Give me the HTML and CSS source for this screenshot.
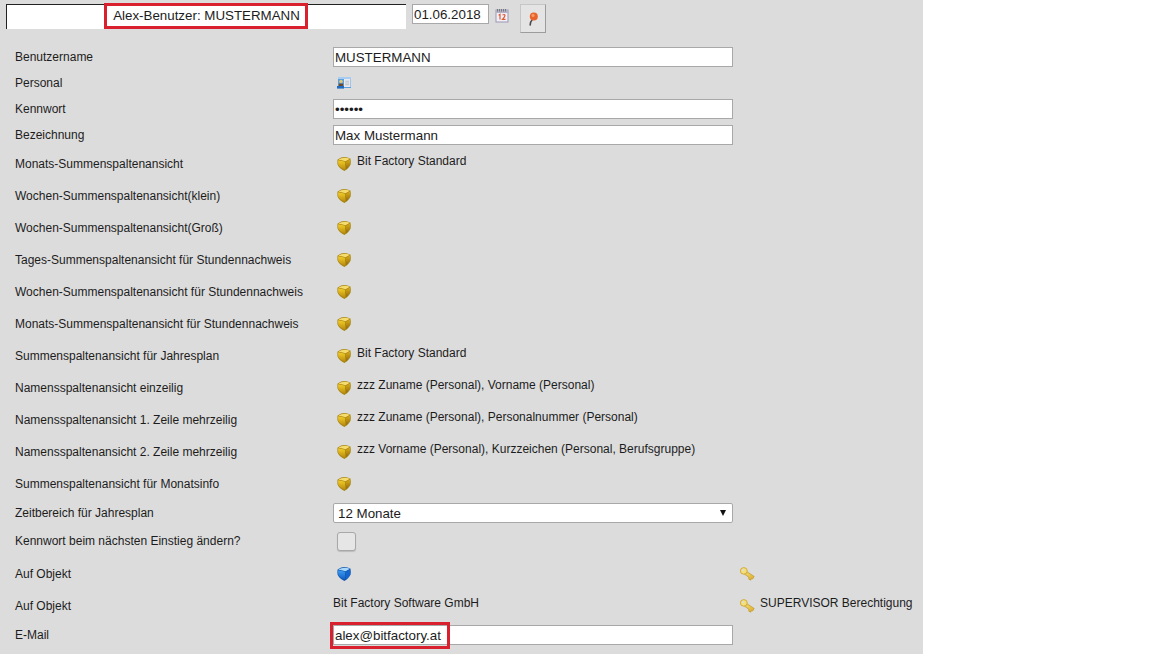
FILE: index.html
```
<!DOCTYPE html>
<html lang="de">
<head>
<meta charset="utf-8">
<title>Alex-Benutzer</title>
<link rel="stylesheet" href="styles.css">
</head>
<body>
<svg class="defs" width="0" height="0" aria-hidden="true">
  <defs>
    <linearGradient id="gSide" x1="0" y1="0" x2="0" y2="1"><stop offset="0" stop-color="#f3cf2a"/><stop offset="1" stop-color="#b88a0c"/></linearGradient>
    <linearGradient id="gRight" x1="0" y1="0" x2="0" y2="1"><stop offset="0" stop-color="#d9ac18"/><stop offset="1" stop-color="#8f6c10"/></linearGradient>
    <linearGradient id="bSide" x1="0" y1="0" x2="0" y2="1"><stop offset="0" stop-color="#3f9ff2"/><stop offset="1" stop-color="#0e5cc4"/></linearGradient>
    <linearGradient id="kGold" x1="0" y1="0" x2="1" y2="1"><stop offset="0" stop-color="#f7e27e"/><stop offset="1" stop-color="#d9a924"/></linearGradient>
    <symbol id="cube-gold" viewBox="0 0 14 15">
      <path d="M0.6 3.4 Q7 -0.8 13.4 2.6 Q14 6 13.6 8.2 Q12.4 12 7.4 15 Q1.8 12.4 0.6 8.6 Q0.2 6 0.6 3.4 Z" fill="#a98410"/>
      <path d="M1.2 3.5 Q7 0.2 12.9 2.8 L8.6 5.2 Z" fill="#f4dc70"/>
      <path d="M1.2 4.2 L8.2 5.8 V13.8 Q2.6 11.6 1.2 8.4 Q0.9 6 1.2 4.2 Z" fill="url(#gSide)"/>
      <path d="M9 5.8 L13 3.6 Q13.3 6 13 8 Q12 11.2 9 13.2 Z" fill="url(#gRight)"/>
    </symbol>
    <symbol id="cube-blue" viewBox="0 0 14 15">
      <path d="M0.6 3.4 Q7 -0.8 13.4 2.6 Q14 6 13.6 8.2 Q12.4 12 7.4 15 Q1.8 12.4 0.6 8.6 Q0.2 6 0.6 3.4 Z" fill="#0f56b0"/>
      <path d="M1.2 3.5 Q7 0.2 12.9 2.8 L8.6 5.2 Z" fill="#a9d8fb"/>
      <path d="M1.2 4.2 L8.2 5.8 V13.8 Q2.6 11.6 1.2 8.4 Q0.9 6 1.2 4.2 Z" fill="url(#bSide)"/>
      <path d="M9 5.8 L13 3.6 Q13.3 6 13 8 Q12 11.2 9 13.2 Z" fill="#1766cf"/>
    </symbol>
    <symbol id="key" viewBox="0 0 15 15">
      <path d="M5.2 3.6 L14.2 9.4 L12.6 12 L11.6 11.2 L10.8 13.2 L8.8 12.2 L8.8 10.2 L3.6 6.6 Z" fill="url(#kGold)" stroke="#bb911f" stroke-width=".6"/>
      <ellipse cx="3.8" cy="3.9" rx="3.4" ry="3.3" fill="#f5df7a" stroke="#c79d2b" stroke-width=".8"/>
      <circle cx="3.1" cy="3.1" r="1" fill="#dcdcdc"/>
    </symbol>
  </defs>
</svg>

<main class="panel">
  <header class="topbar">
    <div class="title">Alex-Benutzer: MUSTERMANN</div>
    <input class="date" type="text" value="01.06.2018" aria-label="Datum">
    <svg class="cal" viewBox="0 0 14 15" width="14" height="15" aria-hidden="true">
      <rect x="1" y="2" width="12" height="12" fill="#f1eff8" stroke="#9a97b4"/>
      <rect x="1" y="2" width="12" height="3" fill="#b4b2c6"/>
      <path d="M2.5 1v2.5M4.5 1v2.5M6.5 1v2.5M8.5 1v2.5M10.5 1v2.5" stroke="#6a6a6a" stroke-width=".8"/>
      <path d="M3.6 7.2 L5 6.4 V11.5 M7.5 7 Q9.8 5.8 10 7.6 Q10 8.6 7.5 11.3 H10.5" fill="none" stroke="#de5a30" stroke-width="1.2"/>
    </svg>
    <button class="pin" type="button" aria-label="Anheften">
      <svg viewBox="0 0 12 16" width="12" height="16" aria-hidden="true">
        <path d="M5 9 Q3.4 10.5 3.2 14" fill="none" stroke="#4a4a4a" stroke-width="1.6" stroke-linecap="round"/>
        <circle cx="6.8" cy="5.6" r="4" fill="#e8642a"/>
        <circle cx="6" cy="4.4" r="1.6" fill="#f49a68"/>
      </svg>
    </button>
    <div class="mark mark-title"></div>
  </header>

  <form class="form">
    <div class="row r26"><span class="label">Benutzername</span><div class="val"><input class="field" type="text" value="MUSTERMANN"></div></div>
    <div class="row r26"><span class="label">Personal</span><div class="val">
      <svg class="person" viewBox="0 0 14 13" width="14" height="13" aria-hidden="true">
        <rect x="1" y="1" width="13" height="11" fill="#5a9fe0"/>
        <rect x="1" y="1" width="13" height="2" fill="#a9cdf0"/>
        <rect x="7" y="3" width="6.5" height="8" fill="#e8ecf2"/>
        <path d="M8.2 5.2h4M8.2 7h4M8.2 8.8h4" stroke="#a5afbd" stroke-width=".7"/>
        <circle cx="4" cy="5.4" r="1.7" fill="#e9c66d"/>
        <rect x="1.8" y="7.6" width="4.4" height="2.4" fill="#74481f"/>
        <rect x="0" y="10" width="7" height="2.6" fill="#1e6cc4"/>
      </svg>
    </div></div>
    <div class="row r26"><span class="label">Kennwort</span><div class="val"><input class="field" type="password" value="123456"></div></div>
    <div class="row r26"><span class="label">Bezeichnung</span><div class="val"><input class="field" type="text" value="Max Mustermann"></div></div>

    <div class="row r32"><span class="label">Monats-Summenspaltenansicht</span><div class="val"><svg class="cube"><use href="#cube-gold"/></svg><span class="cube-text">Bit Factory Standard</span></div></div>
    <div class="row r32"><span class="label">Wochen-Summenspaltenansicht(klein)</span><div class="val"><svg class="cube"><use href="#cube-gold"/></svg></div></div>
    <div class="row r32"><span class="label">Wochen-Summenspaltenansicht(Groß)</span><div class="val"><svg class="cube"><use href="#cube-gold"/></svg></div></div>
    <div class="row r32"><span class="label">Tages-Summenspaltenansicht für Stundennachweis</span><div class="val"><svg class="cube"><use href="#cube-gold"/></svg></div></div>
    <div class="row r32"><span class="label">Wochen-Summenspaltenansicht für Stundennachweis</span><div class="val"><svg class="cube"><use href="#cube-gold"/></svg></div></div>
    <div class="row r32"><span class="label">Monats-Summenspaltenansicht für Stundennachweis</span><div class="val"><svg class="cube"><use href="#cube-gold"/></svg></div></div>
    <div class="row r32"><span class="label">Summenspaltenansicht für Jahresplan</span><div class="val"><svg class="cube"><use href="#cube-gold"/></svg><span class="cube-text">Bit Factory Standard</span></div></div>
    <div class="row r32"><span class="label">Namensspaltenansicht einzeilig</span><div class="val"><svg class="cube"><use href="#cube-gold"/></svg><span class="cube-text">zzz Zuname (Personal), Vorname (Personal)</span></div></div>
    <div class="row r32"><span class="label">Namensspaltenansicht 1. Zeile mehrzeilig</span><div class="val"><svg class="cube"><use href="#cube-gold"/></svg><span class="cube-text">zzz Zuname (Personal), Personalnummer (Personal)</span></div></div>
    <div class="row r32"><span class="label">Namensspaltenansicht 2. Zeile mehrzeilig</span><div class="val"><svg class="cube"><use href="#cube-gold"/></svg><span class="cube-text">zzz Vorname (Personal), Kurzzeichen (Personal, Berufsgruppe)</span></div></div>
    <div class="row r32"><span class="label">Summenspaltenansicht für Monatsinfo</span><div class="val"><svg class="cube"><use href="#cube-gold"/></svg></div></div>

    <div class="row r26"><span class="label">Zeitbereich für Jahresplan</span><div class="val"><div class="select-wrap"><select class="select"><option>12 Monate</option></select></div></div></div>
    <div class="row r30"><span class="label">Kennwort beim nächsten Einstieg ändern?</span><div class="val"><input class="check" type="checkbox"></div></div>
    <div class="row r32 obj-first"><span class="label">Auf Objekt</span><div class="val"><svg class="cube"><use href="#cube-blue"/></svg></div><div class="rights"><svg class="keyicon"><use href="#key"/></svg></div></div>
    <div class="row r32"><span class="label">Auf Objekt</span><div class="val"><span class="plain">Bit Factory Software GmbH</span></div><div class="rights"><svg class="keyicon"><use href="#key"/></svg><span class="rights-text">SUPERVISOR Berechtigung</span></div></div>
    <div class="row r26 mail"><span class="label">E-Mail</span><div class="val"><input class="field" type="text" value="alex@bitfactory.at"></div><div class="mark mark-mail"></div></div>
  </form>
</main>
</body>
</html>
```

FILE: styles.css
```
* { box-sizing: border-box; }

html, body {
  margin: 0;
  padding: 0;
  height: 654px;
  overflow: hidden;
  background: #fff;
}

body {
  font-family: "Liberation Sans", Arial, sans-serif;
  font-size: 12px;
  color: #1c1c1c;
}

.defs { position: absolute; }

.panel {
  width: 923px;
  height: 654px;
  background: #dcdcdc;
  overflow: hidden;
}

/* top bar */
.topbar {
  position: relative;
  display: flex;
  align-items: flex-start;
  height: 44px;
  padding: 4px 0 0 6px;
}

.title {
  width: 400px;
  height: 25px;
  background: #fff;
  border-top: 1px solid #222;
  border-left: 1px solid #222;
  text-align: center;
  line-height: 21px;
  font-size: 13.33px;
}

.date {
  width: 77px;
  height: 20px;
  margin-left: 6px;
  padding: 0 1px;
  border: 1px solid #a8a8a8;
  background: #fff;
  font: 13.33px "Liberation Sans", Arial, sans-serif;
  color: #1c1c1c;
}

.cal { margin: 4px 0 0 6px; }

.pin {
  display: flex;
  align-items: center;
  justify-content: center;
  width: 26px;
  height: 29px;
  margin: 0 0 0 11px;
  padding: 0;
  background: #e4e4e4;
  border: 1px solid #c6c6c6;
  border-right-color: #9c9c9c;
  border-bottom-color: #9c9c9c;
}

.mark {
  position: absolute;
  border: 3px solid #d9202e;
}

.mark-title {
  left: 104px;
  top: 3px;
  width: 204px;
  height: 26px;
}

/* form rows */
.form {
  display: flex;
  flex-direction: column;
}

.row {
  position: relative;
  display: grid;
  grid-template-columns: 318px 400px auto;
  align-items: center;
  padding-left: 15px;
}

.r26 { height: 26px; }
.r30 { height: 30px; }
.r32 { height: 32px; }
.obj-first { margin-top: 2px; }

.label { white-space: nowrap; margin-top: -1px; }

.val {
  display: flex;
  align-items: flex-start;
  height: 100%;
}

.field {
  width: 400px;
  height: 20px;
  margin-top: 3px;
  padding: 0 1px;
  border: 1px solid #a8a8a8;
  background: #fff;
  font: 13.33px "Liberation Sans", Arial, sans-serif;
  color: #1c1c1c;
  outline: none;
}

.person { margin: 6px 0 0 4px; }

.cube {
  width: 14px;
  height: 15px;
  margin: 8px 0 0 4px;
  flex: none;
}

.cube-text {
  margin: 6px 0 0 6px;
  line-height: 14px;
  white-space: nowrap;
}

.plain {
  margin-top: 6px;
  line-height: 14px;
  white-space: nowrap;
}

.select-wrap {
  position: relative;
  width: 400px;
  margin-top: 3px;
}

.select-wrap::after {
  content: "";
  position: absolute;
  right: 7px;
  top: 7px;
  border-style: solid;
  border-width: 6px 3px 0;
  border-color: #111 transparent transparent;
  pointer-events: none;
}

.select {
  display: block;
  width: 400px;
  height: 20px;
  padding: 0 4px;
  border: 1px solid #a8a8a8;
  border-radius: 2px;
  background: #fff;
  font: 13.33px "Liberation Sans", Arial, sans-serif;
  color: #1c1c1c;
  appearance: none;
  -webkit-appearance: none;
}

.check {
  width: 19px;
  height: 19px;
  margin: 6px 0 0 4px;
  border: 1px solid #a8a8a8;
  border-radius: 3px;
  background: #e6e6e6;
  appearance: none;
  -webkit-appearance: none;
  box-shadow: 0 1px 1px rgba(0, 0, 0, .15);
}

.rights {
  display: flex;
  align-items: flex-start;
  height: 100%;
  margin-left: 7px;
}

.keyicon {
  width: 15px;
  height: 15px;
  margin-top: 9px;
  flex: none;
}

.rights-text {
  margin: 6px 0 0 5px;
  line-height: 14px;
  white-space: nowrap;
}

.mark-mail {
  left: 330px;
  top: 0;
  width: 120px;
  height: 27px;
  pointer-events: none;
}
```
